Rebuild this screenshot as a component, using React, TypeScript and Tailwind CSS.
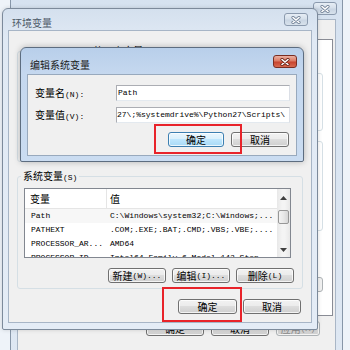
import React from 'react';

const CJK_SPLIT = /([\u3000-\u9fff\uff00-\uffef]+)/;
const CJK_TEST = /[\u3000-\u9fff\uff00-\uffef]/;

// SimSun-like mix: CJK glyphs at 10px, ASCII half-width at 8px mono
function T({ s }: { s: string }) {
  const parts = s.split(CJK_SPLIT).filter(Boolean);
  return (
    <>
      {parts.map((p, i) =>
        CJK_TEST.test(p) ? (
          <span key={i} className="font-['Noto_Sans_CJK_SC',sans-serif] text-[10px]">
            {p}
          </span>
        ) : (
          <span key={i} className="font-['Liberation_Mono',monospace] text-[8px] whitespace-pre">
            {p}
          </span>
        )
      )}
    </>
  );
}

function CloseBtn({ red }: { red?: boolean }) {
  return (
    <div
      className={`w-[24px] h-[13px] rounded-[3px] border flex items-center justify-center ${
        red
          ? 'border-[#7a2d22] bg-[linear-gradient(#eab0a2,#dc7a63_45%,#c8452f_55%,#d86a50)]'
          : 'border-[#8b9aae] bg-[linear-gradient(#e6edf5,#d6e0eb_45%,#c9d5e3_55%,#d8e2ec)]'
      }`}
    >
      <svg width="10" height="8" viewBox="0 0 10 8">
        <path
          d="M2 1.5L8 6.5M8 1.5L2 6.5"
          stroke={red ? '#6a2418' : '#76859a'}
          strokeWidth="3.2"
          strokeLinecap="round"
        />
        <path d="M2 1.5L8 6.5M8 1.5L2 6.5" stroke="#ffffff" strokeWidth="1.6" strokeLinecap="round" />
      </svg>
    </div>
  );
}

function Btn({ s, w, blue, dim }: { s: string; w: string; blue?: boolean; dim?: boolean }) {
  return (
    <div
      className={`h-[15px] ${w} shrink-0 flex items-center justify-center rounded-[3px] border leading-[12px] shadow-[inset_0_0_0_1px_rgba(255,255,255,0.75)] ${
        blue
          ? 'border-[#3c7fb1] bg-[linear-gradient(#eaf6fd_0%,#d9f0fc_50%,#bee6fd_50%,#a7d9f5_100%)]'
          : 'border-[#707070] bg-[linear-gradient(#f2f2f2_0%,#ebebeb_50%,#dddddd_50%,#cfcfcf_100%)]'
      } ${dim ? 'text-[#8a8a8a] border-[#adb2b5]' : 'text-black'}`}
    >
      <T s={s} />
    </div>
  );
}

const rows = [
  ['Path', 'C:\\Windows\\system32;C:\\Windows;...'],
  ['PATHEXT', '.COM;.EXE;.BAT;.CMD;.VBS;.VBE;....'],
  ['PROCESSOR_AR...', 'AMD64'],
  ['PROCESSOR_ID', 'Intel64 Family 6 Model 142 Step'],
];

export default function App() {
  return (
    <div className="relative w-[350px] h-[350px] overflow-hidden bg-[#eef3f9] leading-[12px]">
      {/* deepest window: 系统属性 */}
      <div className="absolute left-[10px] top-[-6px] w-[333px] h-[380px] rounded-t-[6px] border border-[#8796a8] bg-[linear-gradient(#d6e2f0,#dfe8f3)] flex flex-col px-[6px]">
        <div className="h-[24px] shrink-0 flex justify-end items-start">
          <div className="mt-[7px] mr-[-1px]">
            <CloseBtn />
          </div>
        </div>
        <div className="flex-1 bg-[#f0f0f0] border border-[#a9b6c6] flex flex-col">
          <div className="mt-[19px] ml-[3px] mr-[2px] h-[277px] bg-white border border-[#898c95] flex flex-col items-end pr-[9px]">
            <div className="mt-[33px] w-[280px] h-[58px] rounded-[3px] border border-[#d5dfe5]" />
            <div className="mt-[10px] w-[280px] h-[90px] rounded-[3px] border border-[#d5dfe5]" />
            <div className="mt-[46px] w-[58px] h-[15px] rounded-[3px] border border-[#adb2b5] bg-[#f2f2f2]" />
          </div>
          <div className="mt-[5px] flex justify-end gap-[7px] pr-[15px] text-[#9a9a9a]">
            <Btn s="确定" w="w-[58px]" />
            <Btn s="取消" w="w-[58px]" />
            <Btn s="应用(A)" w="w-[44px]" dim />
          </div>
        </div>
      </div>

      {/* 环境变量 window */}
      <div className="absolute left-[2px] top-[8px] w-[316px] h-[322px] rounded-t-[6px] rounded-b-[2px] border border-[#7c8a9b] bg-[linear-gradient(#d4e0ee,#e0e9f4_30px,#e4ecf6)] flex flex-col px-[5px] pb-[6px] shadow-[0_0_4px_rgba(0,0,0,0.15)]">
        <div className="h-[21px] shrink-0 flex items-start justify-between">
          <div className="mt-[6px] ml-[4px] text-[#4e5a68]">
            <T s="环境变量" />
          </div>
          <div className="mt-[4px] mr-[4px]">
            <CloseBtn />
          </div>
        </div>
        <div className="flex-1 bg-[#f0f0f0] border border-[#a7b5c6] flex flex-col px-[8px]">
          <fieldset className="mt-[12px] h-[119px] rounded-[3px] border border-[#d5dfe5]">
            <legend className="ml-[7px] px-[1px]">
              <T s="Administrator 的用户变量(U)" />
            </legend>
          </fieldset>
          <fieldset className="mt-[6px] h-[121px] rounded-[3px] border border-[#d5dfe5] flex flex-col">
            <legend className="ml-[3px] px-[2px]">
              <T s="系统变量(S)" />
            </legend>
            <div className="mt-[4px] ml-[6px] w-[267px] h-[70px] bg-white border border-[#828790] flex overflow-hidden">
              <div className="flex-1 flex flex-col">
                <div className="h-[20px] shrink-0 flex border-b border-[#e5e5e5]">
                  <div className="w-[82px] pl-[5px] flex items-center border-r border-[#e5e5e5]">
                    <T s="变量" />
                  </div>
                  <div className="pl-[3px] flex items-center">
                    <T s="值" />
                  </div>
                </div>
                {rows.map(([k, v], i) => (
                  <div
                    key={k}
                    className={`h-[14px] shrink-0 flex items-center font-['Liberation_Mono',monospace] text-[8px] whitespace-pre ${
                      i === 0 ? 'bg-[#f7f7f7]' : ''
                    }`}
                  >
                    <div className="w-[82px] pl-[6px] overflow-hidden">{k}</div>
                    <div className="pl-[3px] overflow-hidden">{v}</div>
                  </div>
                ))}
              </div>
              <div className="w-[13px] shrink-0 flex flex-col bg-[linear-gradient(90deg,#e8e8e8,#f4f4f4_40%,#f4f4f4_60%,#e8e8e8)]">
                <div className="h-[17px] flex items-center justify-center">
                  <svg width="7" height="4" viewBox="0 0 7 4">
                    <path d="M0 4L3.5 0L7 4Z" fill="#404040" />
                  </svg>
                </div>
                <div className="mt-[4px] mx-[1px] h-[14px] rounded-[2px] border border-[#979797] bg-[linear-gradient(90deg,#f3f3f3,#e8e8e8_50%,#d6d6d6)]" />
                <div className="flex-1" />
                <div className="h-[14px] flex items-center justify-center">
                  <svg width="7" height="4" viewBox="0 0 7 4">
                    <path d="M0 0L3.5 4L7 0Z" fill="#404040" />
                  </svg>
                </div>
              </div>
            </div>
            <div className="mt-[10px] mr-[8px] flex justify-end gap-[6px]">
              <Btn s="新建(W)..." w="w-[58px]" />
              <Btn s="编辑(I)..." w="w-[58px]" />
              <Btn s="删除(L)" w="w-[58px]" />
            </div>
          </fieldset>
          <div className="mt-[10px] mr-[2px] flex justify-end gap-[6px]">
            <Btn s="确定" w="w-[59px]" />
            <Btn s="取消" w="w-[58px]" />
          </div>
        </div>
      </div>

      {/* 编辑系统变量 dialog */}
      <div className="absolute left-[20px] top-[47px] w-[284px] h-[115px] rounded-t-[6px] rounded-b-[2px] border border-[#5d6d80] bg-[linear-gradient(#b8cfea,#c5d8ef_26px,#cadcf1)] flex flex-col px-[6px] pb-[5px] shadow-[0_0_6px_rgba(0,0,0,0.25)]">
        <div className="h-[26px] shrink-0 flex items-start justify-between">
          <div className="mt-[9px] ml-[3px] text-[#1a1a1a]">
            <T s="编辑系统变量" />
          </div>
          <div className="mt-[7px]">
            <CloseBtn red />
          </div>
        </div>
        <div className="flex-1 bg-[#f0f0f0] border border-[#98a9bd] flex flex-col">
          <div className="mt-[10px] flex items-center">
            <div className="w-[88px] pl-[7px]">
              <T s="变量名(N):" />
            </div>
            <div className="w-[174px] h-[16px] bg-white border border-[#abadb3] border-b-[#e3e9ef] border-r-[#dbdfe6] flex items-center pl-[1px] font-['Liberation_Mono',monospace] text-[8px]">
              Path
            </div>
          </div>
          <div className="mt-[6px] flex items-center">
            <div className="w-[88px] pl-[7px]">
              <T s="变量值(V):" />
            </div>
            <div className="w-[174px] h-[16px] bg-white border border-[#abadb3] border-b-[#e3e9ef] border-r-[#dbdfe6] flex items-center overflow-hidden font-['Liberation_Mono',monospace] text-[8px] whitespace-pre">
              27\;%systemdrive%\Python27\Scripts\
            </div>
          </div>
          <div className="mt-[9px] mr-[7px] flex justify-end gap-[7px]">
            <Btn s="确定" w="w-[56px]" blue />
            <Btn s="取消" w="w-[58px]" />
          </div>
        </div>
      </div>

      {/* red annotation boxes */}
      <div className="absolute left-[154px] top-[124px] w-[88px] h-[30px] border-2 border-[#e8232a]" />
      <div className="absolute left-[162px] top-[287px] w-[80px] h-[35px] border-2 border-[#e8232a]" />
    </div>
  );
}
